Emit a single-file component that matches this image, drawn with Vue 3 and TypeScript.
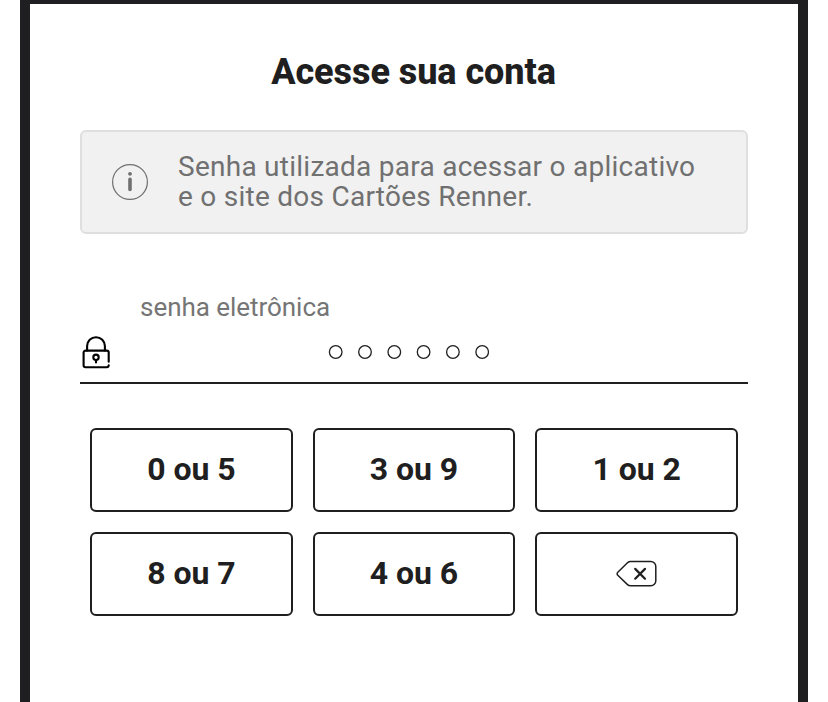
<script setup lang="ts">
const keys: string[] = ['0 ou 5', '3 ou 9', '1 ou 2', '8 ou 7', '4 ou 6']
const digits = 6
</script>

<template>
  <main class="frame">
    <h1 class="title">Acesse sua conta</h1>

    <section class="notice">
      <svg class="info" viewBox="0 0 36 36" aria-hidden="true">
        <circle cx="18" cy="18" r="17.4" fill="none" stroke="currentColor" stroke-width="1.2" />
        <circle cx="18" cy="9.8" r="1.9" fill="currentColor" />
        <path d="M18 15.4v10" stroke="currentColor" stroke-width="3.6" stroke-linecap="round" />
      </svg>
      <p class="notice-text">Senha utilizada para acessar o aplicativo<br />e o site dos Cartões Renner.</p>
    </section>

    <section class="field">
      <span class="label">senha eletrônica</span>
      <div class="row">
        <svg class="lock" viewBox="0 0 30 34" fill="none" stroke="currentColor" stroke-width="2.1" stroke-linecap="round" stroke-linejoin="round" aria-hidden="true">
          <path d="M7.1 15.6V11.1a8.9 8.9 0 0 1 17.8 0v4.5" />
          <path d="M28.7 26.7V17.6a2 2 0 0 0-2-2H5.6a2 2 0 0 0-2 2V30.3a2 2 0 0 0 2 2H26.7a2 2 0 0 0 2-2" />
          <circle cx="16" cy="22.3" r="2.7" />
          <path d="M16 25.1v2.4" />
        </svg>
        <svg class="dots" viewBox="0 0 162 16" aria-hidden="true">
          <circle v-for="n in digits" :key="n" :cx="7.7 + (n - 1) * 29.3" cy="8" r="6.3" fill="none" stroke="currentColor" stroke-width="1.3" />
        </svg>
      </div>
    </section>

    <section class="keypad">
      <button v-for="k in keys" :key="k" class="key" type="button">{{ k }}</button>
      <button class="key" type="button" aria-label="Apagar">
        <svg class="erase" viewBox="0 0 42 28" fill="none" stroke="currentColor" stroke-linecap="round" stroke-linejoin="round" aria-hidden="true">
          <path d="M14.6 1.6H34.8a5 5 0 0 1 5 5v14.2a5 5 0 0 1-5 5H14.6a4.5 4.5 0 0 1-3.1-1.2L1.8 15.2a2 2 0 0 1 0-3L11.5 2.8a4.5 4.5 0 0 1 3.1-1.2Z" stroke-width="1.5" />
          <path d="M19.2 8.9l9.8 9.8M29 8.9L19.2 18.7" stroke-width="2.2" />
        </svg>
      </button>
    </section>
  </main>
</template>

<style>
body {
  margin: 0;
  background: #fff;
}
</style>

<style scoped>
.frame {
  box-sizing: border-box;
  width: 788px;
  height: 702px;
  margin: 0 auto 0 20px;
  padding: 0 50px;
  border: solid #1f1f21;
  border-width: 4px 10px 0;
  font-family: Roboto, sans-serif;
  color: #1f1f21;
  overflow: hidden;
}
.title {
  margin: 46px 0 0;
  padding-right: 1px;
  font-size: 36px;
  line-height: 44px;
  font-weight: 800;
  letter-spacing: -0.06px;
  text-align: center;
}
.notice {
  box-sizing: border-box;
  display: flex;
  align-items: center;
  gap: 30px;
  height: 104px;
  margin-top: 36px;
  padding: 0 30px;
  border: 2px solid #dfdfdf;
  border-radius: 6px;
  background: #f1f1f1;
  color: #707070;
}
.info {
  width: 36px;
  height: 36px;
  flex: none;
}
.notice-text {
  margin: 0;
  font-size: 28px;
  line-height: 30px;
  letter-spacing: 0.26px;
  white-space: nowrap;
}
.field {
  box-sizing: border-box;
  height: 94px;
  margin-top: 56px;
  border-bottom: 2px solid #1f1f21;
}
.label {
  display: block;
  padding-left: 60px;
  font-size: 26px;
  line-height: 34px;
  letter-spacing: -0.04px;
  color: #757575;
}
.row {
  display: flex;
  align-items: center;
  height: 56px;
}
.lock {
  width: 30px;
  height: 34px;
  color: #000;
}
.dots {
  width: 162px;
  height: 16px;
  margin-left: 218px;
}
.keypad {
  display: grid;
  grid-template-columns: repeat(3, 1fr);
  grid-auto-rows: 84px;
  gap: 20px;
  margin: 44px 10px 0;
}
.key {
  display: flex;
  align-items: center;
  justify-content: center;
  padding: 0 0 2px;
  border: 2px solid #1f1f21;
  border-radius: 6px;
  background: #fff;
  color: inherit;
  font: 700 32px/40px Roboto, sans-serif;
  letter-spacing: -0.05px;
}
.erase {
  width: 42px;
  height: 28px;
  margin-top: 2px;
}
</style>
